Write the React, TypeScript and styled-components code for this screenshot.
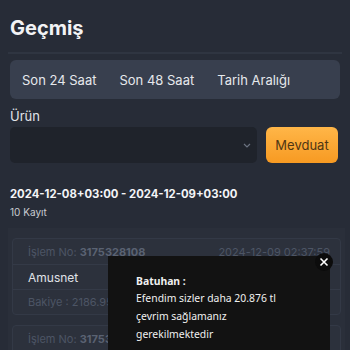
import React from "react";
import styled, { createGlobalStyle } from "styled-components";

const Global = createGlobalStyle`
  html, body { margin: 0; padding: 0; background: #272c37; }
  body { font-family: Inter, "Noto Sans", sans-serif; color: #e8eaee; overflow: hidden; }
  * { box-sizing: border-box; }
`;

const Page = styled.div`
  position: relative;
  width: 350px;
  height: 350px;
  overflow: hidden;
  background: #272c37;
`;

const Header = styled.div`
  height: 54px;
  padding: 16px 0 0 2px;
  border-bottom: 2px solid #2f3541;
  margin: 0 8px;
`;

const Title = styled.h1`
  margin: 0;
  font-size: 20px;
  font-weight: 700;
  color: #f2f3f5;
`;

const Tabs = styled.div`
  margin: 6px 10px 0;
  height: 39px;
  border-radius: 6px;
  background: #383f4e;
  display: flex;
  align-items: center;
  padding-left: 12px;
  gap: 23px;
`;

const Tab = styled.span`
  font-size: 13px;
  color: #e6e8ec;
`;

const Section = styled.div`
  padding: 0 10px;
`;

const Label = styled.div`
  margin-top: 9px;
  font-size: 13px;
  color: #e2e4e8;
`;

const Row = styled.div`
  display: flex;
  gap: 9px;
  margin-top: 3px;
`;

const Select = styled.div`
  flex: 0 0 247px;
  height: 36px;
  border-radius: 5px;
  background: #1f232b;
  display: flex;
  align-items: center;
  justify-content: flex-end;
  padding-right: 5px;
`;

const Button = styled.div`
  flex: 1;
  margin-right: 2px;
  height: 36px;
  border-radius: 6px;
  background: linear-gradient(#ffb648, #f79a22);
  color: #4f3614;
  font-size: 13px;
  display: flex;
  align-items: center;
  justify-content: center;
`;

const DateRange = styled.div`
  margin-top: 24px;
  font-size: 11.3px;
  font-weight: 700;
  color: #f4f5f7;
`;

const Count = styled.div`
  margin-top: 5px;
  font-size: 10px;
  color: #c9ccd2;
`;

const List = styled.div`
  margin: 10px 5px 0 8px;
  padding: 10px 4px 10px 4px;
  background: #2a2f3a;
  display: flex;
  flex-direction: column;
  gap: 10px;
`;

const Card = styled.div`
  border: 1px solid #333946;
  border-radius: 4px;
  background: #2c313c;
  display: flex;
  flex-direction: column;
`;

const CardRow = styled.div<{ $line?: boolean }>`
  height: 25px;
  display: flex;
  align-items: center;
  justify-content: space-between;
  padding: 0 10px 0 15px;
  border-top: ${(p) => (p.$line ? "1px solid #343a47" : "none")};
  font-size: 11px;
`;

const Dim = styled.span`
  color: #4d5565;
`;

const DimBold = styled.span`
  color: #5a6272;
  font-weight: 700;
`;

const Name = styled.span`
  color: #e0e3e8;
  font-size: 12px;
`;

const Popup = styled.div`
  position: absolute;
  left: 108px;
  top: 256px;
  width: 222px;
  height: 110px;
  background: #121212;
  padding: 17px 0 0 28px;
  font-family: "Noto Sans", sans-serif;
  font-size: 10.4px;
  color: #f0f0f0;
  line-height: 18px;
`;

const PopupName = styled.div`
  font-weight: 700;
  line-height: 16px;
`;

const Close = styled.div`
  position: absolute;
  right: -3px;
  top: -3px;
  width: 18px;
  height: 18px;
  border-radius: 50%;
  background: #0c0c0c;
  display: flex;
  align-items: center;
  justify-content: center;
`;

export default function App() {
  return (
    <Page>
      <Global />
      <Header>
        <Title>Geçmiş</Title>
      </Header>
      <Tabs>
        <Tab>Son 24 Saat</Tab>
        <Tab>Son 48 Saat</Tab>
        <Tab>Tarih Aralığı</Tab>
      </Tabs>
      <Section>
        <Label>Ürün</Label>
        <Row>
          <Select>
            <svg width="10" height="10" viewBox="0 0 10 10">
              <path d="M2 4 L5 7 L8 4" stroke="#6b7280" strokeWidth="1.2" fill="none" />
            </svg>
          </Select>
          <Button>Mevduat</Button>
        </Row>
        <DateRange>2024-12-08+03:00 - 2024-12-09+03:00</DateRange>
        <Count>10 Kayıt</Count>
      </Section>
      <List>
        <Card>
          <CardRow>
            <span>
              <Dim>İşlem No: </Dim>
              <DimBold>3175328108</DimBold>
            </span>
            <Dim>2024-12-09 02:37:59</Dim>
          </CardRow>
          <CardRow $line>
            <Name>Amusnet</Name>
          </CardRow>
          <CardRow $line>
            <Dim>Bakiye : 2186.95</Dim>
          </CardRow>
        </Card>
        <Card>
          <CardRow>
            <span>
              <Dim>İşlem No: </Dim>
              <DimBold>3175317000</DimBold>
            </span>
            <Dim>2024-12-09 02:30:11</Dim>
          </CardRow>
          <CardRow $line>
            <Name>Amusnet</Name>
          </CardRow>
        </Card>
      </List>
      <Popup>
        <Close>
          <svg width="10" height="10" viewBox="0 0 10 10">
            <path d="M1.5 1.5 L8.5 8.5 M8.5 1.5 L1.5 8.5" stroke="#fff" strokeWidth="1.6" />
          </svg>
        </Close>
        <PopupName>Batuhan :</PopupName>
        <div>Efendim sizler daha 20.876 tl</div>
        <div>çevrim sağlamanız</div>
        <div>gerekilmektedir</div>
      </Popup>
    </Page>
  );
}
